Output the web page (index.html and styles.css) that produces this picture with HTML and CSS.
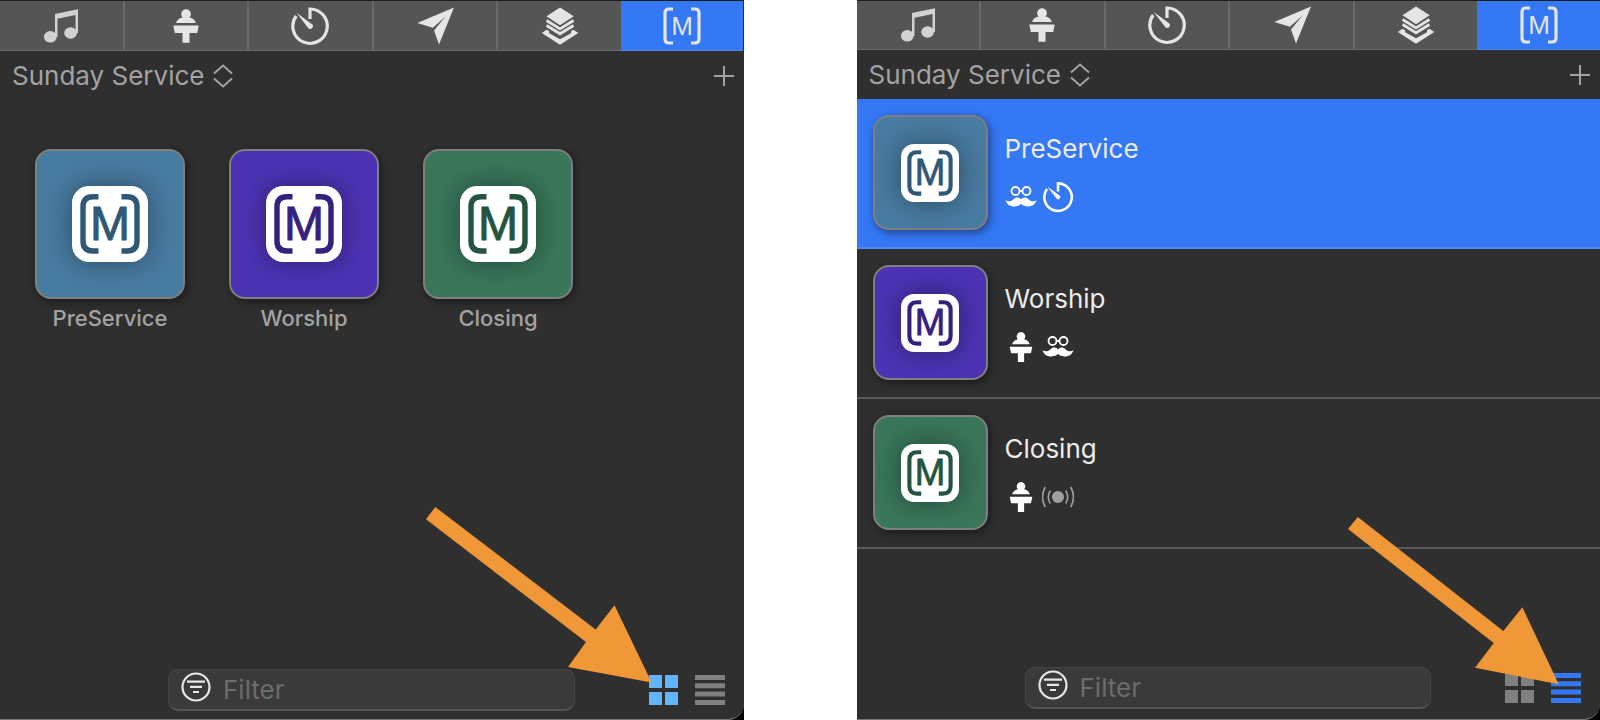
FILE: index.html
```html
<!DOCTYPE html>
<html lang="en">
<head>
  <meta charset="UTF-8" />
  <meta name="viewport" content="width=device-width, initial-scale=1.0" />
  <title>Macros</title>
  <link rel="stylesheet" href="styles.css">
</head>

<body>
  <!-- shared icons -->
  <svg class="sprite" aria-hidden="true">
    <symbol id="music" viewBox="0 0 40 40">
      <ellipse cx="9.3" cy="30.8" rx="6.4" ry="5.8" />
      <ellipse cx="29.6" cy="27" rx="6.4" ry="5.8" />
      <path d="M14 8 37 3.3V27H34.5V9L16.5 12.8V31H14Z" />
    </symbol>
    <symbol id="podium" viewBox="0 0 36 36">
      <path d="M18 1.2a4.8 4.8 0 0 1 3.4 8.2c2.6.6 5.8 2 6.4 5.600H8.200c.6-3.600 3.800-5 6.400-5.600A4.800 4.800 0 0 1 18 1.200Z" />
      <path d="M5.300 17.600H30.700L29.200 25H21.500V34.800H14.500V25H6.800Z" />
    </symbol>
    <symbol id="timer" viewBox="0 0 40 40">
      <path d="M20 13V3A17.200 17.200 0 1 1 6.200 10" fill="none" stroke="currentColor" stroke-width="3.200" />
      <path d="M6.500 6.800 22 18.200A2.600 2.600 0 0 1 18.400 22.200Z" />
    </symbol>
    <symbol id="plane" viewBox="0 0 40 40">
      <path d="M2.300 17 39 1.600 24 38.500 19 24.500 30.500 10.500 17.900 21.800Z" />
    </symbol>
    <symbol id="layers" viewBox="0 0 40 40">
      <path d="M20 1.600 33.700 10.300 20 19.200 6.500 10.300Z" />
      <path d="M6.600 14.500 20 22.900 33.500 14.500M6.600 19.500 20 27.800 33.500 19.500" fill="none" stroke="currentColor" stroke-width="2.800" />
      <path d="M1.800 26.900 6.600 23.700 9.200 25.200V27.200L20 33.200 31 27.200V25.200L33.500 23.700 38.300 26.900 20 38.700Z" />
    </symbol>
    <symbol id="brackets" viewBox="0 0 40 40">
      <path d="M11 3H7Q3 3 3 7V33Q3 37 7 37H11M29 3H33Q37 3 37 7V33Q37 37 33 37H29" fill="none" stroke="currentColor" stroke-width="3.200" />
    </symbol>
    <symbol id="logo" viewBox="0 0 76 76">
      <path d="M26.500 10.800H21Q11 10.800 11 20.800V55Q11 65 21 65H26.500M49.500 10.800H55Q65 10.800 65 20.800V55Q65 65 55 65H49.500" fill="none" stroke="currentColor" stroke-width="5.400" />
    </symbol>
    <symbol id="mustache" viewBox="0 0 32 32">
      <path d="M14.500 10a4 4 0 1 1-8 0a4 4 0 1 1 8 0ZM25.500 10a4 4 0 1 1-8 0a4 4 0 1 1 8 0ZM14.500 10H17.500" fill="none" stroke="currentColor" stroke-width="1.800" />
      <path d="M16 18.600C17.500 16.200 21 15.800 23.500 18.200 26 20.600 28.500 20.800 31.500 19.200 30 23.800 26.500 25.600 22.500 25.400 19.500 25.200 17.500 24.600 16 22.800 14.500 24.600 12.500 25.200 9.500 25.400 5.500 25.600 2 23.800.5 19.200 3.500 20.800 6 20.600 8.500 18.200 11 15.800 14.500 16.200 16 18.600Z" />
    </symbol>
    <symbol id="broadcast" viewBox="0 0 32 32">
      <circle cx="16" cy="16" r="6" />
      <path d="M8.300 9.500Q4.300 16 8.300 22.500M3.300 6Q-2.300 16 3.300 26M23.700 9.500Q27.700 16 23.700 22.500M28.700 6Q34.300 16 28.700 26" fill="none" stroke="currentColor" stroke-width="1.600" />
    </symbol>
    <symbol id="updown" viewBox="0 0 20 24">
      <path d="M1 9.500 10 1.500 19 9.500M1 14.500 10 22.500 19 14.500" fill="none" stroke="currentColor" stroke-width="2" />
    </symbol>
    <symbol id="plus" viewBox="0 0 20 20">
      <path d="M10 0V20M0 10H20" fill="none" stroke="currentColor" stroke-width="2" />
    </symbol>
    <symbol id="filter" viewBox="0 0 30 30">
      <path d="M28.500 15a13.500 13.500 0 1 1-27 0a13.500 13.500 0 1 1 27 0ZM6 9.700H24M9 14.800H21M12 20H18" fill="none" stroke="currentColor" stroke-width="2.200" />
    </symbol>
    <symbol id="grid" viewBox="0 0 30 30">
      <path d="M0 0H13V13H0ZM16 0H29V13H16ZM0 17H13V30H0ZM16 17H29V30H16Z" />
    </symbol>
    <symbol id="lines" viewBox="0 0 30 30">
      <path d="M0 0H30V5H0ZM0 8.300H30V13.300H0ZM0 16.600H30V21.600H0ZM0 25H30V30H0Z" />
    </symbol>
  </svg>

  <main class="panels">
    <!-- grid view -->
    <div class="frame">
      <section class="panel panel-grid">
        <nav class="tabs">
          <button class="tab" aria-label="Audio"><svg class="icon tab-music"><use href="#music" /></svg></button>
          <button class="tab" aria-label="Stage"><svg class="icon icon-podium"><use href="#podium" /></svg></button>
          <button class="tab" aria-label="Timers"><svg class="icon"><use href="#timer" /></svg></button>
          <button class="tab" aria-label="Messages"><svg class="icon"><use href="#plane" /></svg></button>
          <button class="tab" aria-label="Props"><svg class="icon"><use href="#layers" /></svg></button>
          <button class="tab active" aria-label="Macros">
            <svg class="icon" viewBox="0 0 40 40"><use href="#brackets" /><text x="20" y="29">M</text></svg>
          </button>
        </nav>
        <header class="bar">
          <button class="collection">Sunday Service <svg class="updown"><use href="#updown" /></svg></button>
          <button class="add" aria-label="Add macro"><svg class="plus"><use href="#plus" /></svg></button>
        </header>

        <div class="macro-grid">
          <button class="macro">
            <span class="tile blue"><svg class="logo" viewBox="0 0 76 76"><use href="#logo" /><text x="38" y="54">M</text></svg></span>
            <span class="macro-label">PreService</span>
          </button>
          <button class="macro">
            <span class="tile purple"><svg class="logo" viewBox="0 0 76 76"><use href="#logo" /><text x="38" y="54">M</text></svg></span>
            <span class="macro-label">Worship</span>
          </button>
          <button class="macro">
            <span class="tile green"><svg class="logo" viewBox="0 0 76 76"><use href="#logo" /><text x="38" y="54">M</text></svg></span>
            <span class="macro-label">Closing</span>
          </button>
        </div>

        <footer class="footer">
          <label class="filter">
            <svg class="filter-icon"><use href="#filter" /></svg>
            <input type="text" placeholder="Filter" aria-label="Filter" />
          </label>
          <div class="views">
            <button class="view light" aria-label="Grid view"><svg><use href="#grid" /></svg></button>
            <button class="view" aria-label="List view"><svg><use href="#lines" /></svg></button>
          </div>
        </footer>
        <svg class="arrow arrow-grid" viewBox="0 0 226 176" aria-hidden="true">
          <path d="M9.300 0 0 12.300 160 135 142 160 225.600 175.500 188.500 98.300 169.700 122.500Z" />
        </svg>
      </section>
    </div>

    <!-- list view -->
    <div class="frame">
      <section class="panel panel-list">
        <nav class="tabs">
          <button class="tab" aria-label="Audio"><svg class="icon tab-music"><use href="#music" /></svg></button>
          <button class="tab" aria-label="Stage"><svg class="icon icon-podium"><use href="#podium" /></svg></button>
          <button class="tab" aria-label="Timers"><svg class="icon"><use href="#timer" /></svg></button>
          <button class="tab" aria-label="Messages"><svg class="icon"><use href="#plane" /></svg></button>
          <button class="tab" aria-label="Props"><svg class="icon"><use href="#layers" /></svg></button>
          <button class="tab active" aria-label="Macros">
            <svg class="icon" viewBox="0 0 40 40"><use href="#brackets" /><text x="20" y="29">M</text></svg>
          </button>
        </nav>
        <header class="bar">
          <button class="collection">Sunday Service <svg class="updown"><use href="#updown" /></svg></button>
          <button class="add" aria-label="Add macro"><svg class="plus"><use href="#plus" /></svg></button>
        </header>

        <ul class="macro-list">
          <li class="row selected">
            <span class="tile small blue"><svg class="logo" viewBox="0 0 76 76"><use href="#logo" /><text x="38" y="54">M</text></svg></span>
            <div class="info">
              <span class="name">PreService</span>
              <span class="actions">
                <svg><use href="#mustache" /></svg>
                <svg><use href="#timer" /></svg>
              </span>
            </div>
          </li>
          <li class="row">
            <span class="tile small purple"><svg class="logo" viewBox="0 0 76 76"><use href="#logo" /><text x="38" y="54">M</text></svg></span>
            <div class="info">
              <span class="name">Worship</span>
              <span class="actions">
                <svg><use href="#podium" /></svg>
                <svg><use href="#mustache" /></svg>
              </span>
            </div>
          </li>
          <li class="row">
            <span class="tile small green"><svg class="logo" viewBox="0 0 76 76"><use href="#logo" /><text x="38" y="54">M</text></svg></span>
            <div class="info">
              <span class="name">Closing</span>
              <span class="actions">
                <svg><use href="#podium" /></svg>
                <svg class="dim"><use href="#broadcast" /></svg>
              </span>
            </div>
          </li>
        </ul>

        <footer class="footer">
          <label class="filter">
            <svg class="filter-icon"><use href="#filter" /></svg>
            <input type="text" placeholder="Filter" aria-label="Filter" />
          </label>
          <div class="views">
            <button class="view" aria-label="Grid view"><svg><use href="#grid" /></svg></button>
            <button class="view on" aria-label="List view"><svg><use href="#lines" /></svg></button>
          </div>
        </footer>
        <svg class="arrow arrow-list" viewBox="0 0 211 168" aria-hidden="true">
          <path d="M9.800 0 0 12 145.700 126 127 150.700 210.700 167.300 174.400 90.300 155.300 114Z" />
        </svg>
      </section>
    </div>
  </main>
</body>
</html>
```

FILE: styles.css
```css
:root {
  --panel: #2f2f2f;
  --tab: #555;
  --line: #6a6a6a;
  --text: #a3a3a3;
  --accent: #3478f6;
  --arrow: #f09837;
}

* {
  box-sizing: border-box;
}

body {
  margin: 0;
  background: #fff;
  font-family: Inter, "Liberation Sans", sans-serif;
}

button {
  border: none;
  padding: 0;
  background: none;
  color: inherit;
  font: inherit;
  cursor: pointer;
}

svg {
  display: block;
  fill: currentColor;
}

svg text {
  font-family: "Liberation Sans", Arial, sans-serif;
  text-anchor: middle;
}

.sprite {
  position: absolute;
  width: 0;
  height: 0;
}

.panels {
  display: grid;
  grid-template-columns: minmax(0, 1fr) minmax(0, 1fr);
  gap: 113px;
  min-height: 100vh;
}

/* black desktop showing behind the rounded window corner */
.frame {
  display: flex;
  background: #000;
}

.panel {
  position: relative;
  flex: 1;
  min-width: 0;
  display: flex;
  flex-direction: column;
  background: var(--panel);
  border-bottom: 1px solid #777;
  border-bottom-right-radius: 16px;
  color: var(--text);
}

/* tabs */
.tabs {
  display: flex;
  height: 50px;
  border-top: 1px solid #1e1e1e;
}

.panel-grid .tabs {
  height: 51px;
}

.tab {
  flex: 1;
  display: flex;
  align-items: center;
  justify-content: center;
  background: var(--tab);
  border-right: 2px solid var(--line);
  border-bottom: 1px solid var(--line);
  color: #e5e5e5;
}

.tab:nth-child(5) {
  border-right: none;
}

.tab.active {
  background: var(--accent);
  border-right: none;
  border-color: #4d88f2;
}

.icon {
  width: 40px;
  height: 40px;
}

.icon text {
  font-size: 26px;
}

.icon-podium {
  width: 36px;
  height: 36px;
}

.tab-music {
  color: #d2d2d2;
}

/* collection bar */
.bar {
  display: flex;
  align-items: center;
  justify-content: space-between;
  height: 49px;
  padding: 0 10px 0 12px;
}

.collection {
  display: flex;
  align-items: center;
  gap: 9px;
  font-size: 26px;
}

.updown {
  width: 20px;
  height: 24px;
}

.plus {
  width: 20px;
  height: 20px;
}

/* tiles */
.tile {
  display: flex;
  align-items: center;
  justify-content: center;
  width: 150px;
  height: 150px;
  border: 2px solid #7f7f7f;
  border-radius: 16px;
  box-shadow: 2px 3px 10px rgba(0, 0, 0, 0.45);
}

.tile.small {
  width: 115px;
  height: 115px;
}

.logo {
  width: 76px;
  height: 76px;
  border-radius: 17px;
  background: #fff;
  box-shadow: 0 0 26px rgba(0, 0, 0, 0.4);
}

.logo text {
  font-size: 48px;
  stroke: currentColor;
  stroke-width: 1px;
}

.small .logo {
  width: 58px;
  height: 58px;
  border-radius: 13px;
}

.blue {
  background: #487ba0;
  color: #2f5876;
}

.purple {
  background: #4d32b3;
  color: #36207f;
}

.green {
  background: #39765a;
  color: #24543f;
}

/* grid view */
.macro-grid {
  flex: 1;
  display: flex;
  flex-wrap: wrap;
  align-content: flex-start;
  gap: 44px;
  padding: 49px 35px;
}

.macro {
  display: flex;
  flex-direction: column;
  align-items: center;
  gap: 5px;
}

.macro-label {
  font-size: 22px;
  font-weight: 500;
  line-height: 28px;
}

/* list view */
.macro-list {
  flex: 1;
  margin: 0;
  padding: 0;
  list-style: none;
}

.row {
  display: flex;
  gap: 17px;
  height: 150px;
  padding: 16px;
  border-bottom: 2px solid #5a5a5a;
}

.row.selected {
  background: var(--accent);
  border-color: #5089f0;
}

.info {
  display: flex;
  flex-direction: column;
  gap: 16px;
  padding-top: 18px;
}

.name {
  color: #ececec;
  font-size: 26px;
  line-height: 32px;
}

.actions {
  display: flex;
  gap: 5px;
  color: #fff;
}

.actions svg {
  width: 32px;
  height: 32px;
}

.actions .dim {
  color: #a0a0a0;
}

/* footer */
.footer {
  display: flex;
  align-items: center;
  gap: 74px;
  padding: 0 19px 8px 168px;
}

.panel-list .footer {
  padding-bottom: 10px;
}

.filter {
  flex: 1;
  display: flex;
  align-items: flex-start;
  gap: 12px;
  min-width: 0;
  height: 42px;
  padding: 2px 12px;
  background: #3a3a3a;
  border: 1px solid #454545;
  border-bottom: 2px solid #555;
  border-radius: 10px;
}

.filter-icon {
  flex: none;
  width: 30px;
  height: 30px;
  color: #e8e8e8;
}

.filter input {
  flex: 1;
  width: 100%;
  min-width: 0;
  height: 34px;
  padding: 0;
  border: none;
  outline: none;
  background: none;
  color: #ddd;
  font: inherit;
  font-size: 26px;
}

.filter input::placeholder {
  color: #6c6c6c;
}

.views {
  display: flex;
  gap: 16px;
}

.view {
  color: #808080;
}

.view svg {
  width: 30px;
  height: 30px;
}

.view.light {
  color: #62b5fb;
}

.view.on {
  color: var(--accent);
}

/* pointers laid over the panels */
.arrow {
  position: absolute;
  color: var(--arrow);
  pointer-events: none;
}

.arrow-grid {
  right: 92px;
  bottom: 36px;
  width: 226px;
}

.arrow-list {
  right: 41px;
  bottom: 34px;
  width: 211px;
}
```
